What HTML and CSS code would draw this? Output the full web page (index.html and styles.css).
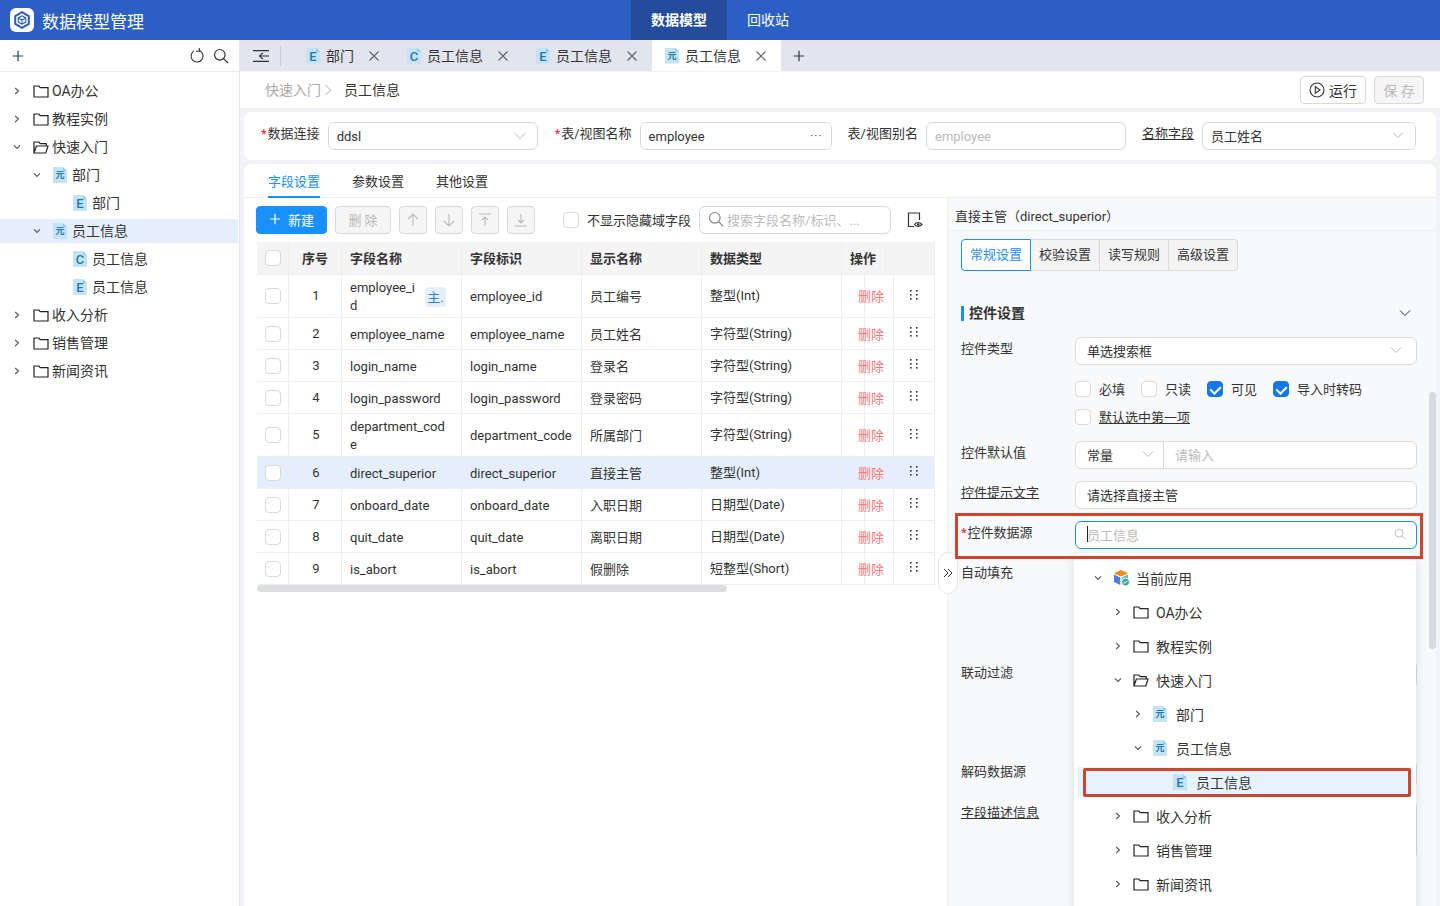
FILE: index.html
```html
<!DOCTYPE html>
<html lang="zh-CN">
<head>
  <meta charset="UTF-8">
  <title>数据模型管理</title>
  <link rel="stylesheet" href="styles.css">
</head>
<body>
  <svg class="sprite" aria-hidden="true">
    <symbol id="folder" viewBox="0 0 16 16"><path d="M1 3h4.8l1.4 1.6H15V14H1z" fill="none" stroke="currentColor" stroke-width="1.2"/></symbol>
    <symbol id="folder-open" viewBox="0 0 16 16"><path d="M1 14V3h4.8l1.4 1.6h6V7M1 14h11.8L15 7H3.4z" fill="none" stroke="currentColor" stroke-width="1.2"/></symbol>
    <symbol id="right" viewBox="0 0 8 8"><path d="M2.2 1l3.2 3-3.2 3" fill="none" stroke="currentColor" stroke-width="1.1"/></symbol>
    <symbol id="down" viewBox="0 0 8 8"><path d="M1 2.4l3 3 3-3" fill="none" stroke="currentColor" stroke-width="1.1"/></symbol>
    <symbol id="caret" viewBox="0 0 12 12"><path d="M1 3.5l5 5 5-5" fill="none" stroke="currentColor" stroke-width="1"/></symbol>
    <symbol id="close" viewBox="0 0 12 12"><path d="M1.5 1.5l9 9M10.5 1.5l-9 9" fill="none" stroke="currentColor" stroke-width="1.2"/></symbol>
    <symbol id="plus" viewBox="0 0 14 14"><path d="M7 1v12M1 7h12" fill="none" stroke="currentColor" stroke-width="1.4"/></symbol>
    <symbol id="search" viewBox="0 0 16 16"><circle cx="6.8" cy="6.8" r="5.3" fill="none" stroke="currentColor" stroke-width="1.2"/><path d="M10.8 10.8l4.2 4.2" fill="none" stroke="currentColor" stroke-width="1.2"/></symbol>
    <symbol id="dots" viewBox="0 0 10 12"><g fill="currentColor"><rect x="1" y="1" width="1.6" height="1.6"/><rect x="7" y="1" width="1.6" height="1.6"/><rect x="1" y="5" width="1.6" height="1.6"/><rect x="7" y="5" width="1.6" height="1.6"/><rect x="1" y="9" width="1.6" height="1.6"/><rect x="7" y="9" width="1.6" height="1.6"/></g></symbol>
  </svg>

  <header class="topbar">
    <div class="brand">
      <span class="logo">
        <svg width="18" height="18" viewBox="0 0 18 18"><path d="M9 1.2l6.8 3.9v7.8L9 16.8l-6.8-3.9V5.100z" fill="none" stroke="#2b5fc4" stroke-width="2"/><path d="M9 4.800l3.800 2.100v4.200L9 13.200l-3.800-2.100V6.900zM5.200 6.900L9 9l3.800-2.100M9 9v4.200" fill="none" stroke="#2b5fc4" stroke-width="1.100"/></svg>
      </span>
      <span class="brand-name">数据模型管理</span>
    </div>
    <nav class="topnav">
      <a class="topnav-item active">数据模型</a>
      <a class="topnav-item">回收站</a>
    </nav>
  </header>

  <div class="app">
    <aside class="sidebar">
      <div class="side-tools">
        <svg class="ico-plus"><use href="#plus"/></svg>
        <span class="side-tools-right">
          <svg width="16" height="16" viewBox="0 0 16 16"><path d="M5 2.900a6 6 0 1 0 5.500-.3M10.300 0v3.200H7" fill="none" stroke="#333" stroke-width="1.100"/></svg>
          <svg width="16" height="16"><use href="#search"/></svg>
        </span>
      </div>
      <div class="tree">
        <div class="node"><svg class="chev"><use href="#right"/></svg><svg class="folder"><use href="#folder"/></svg>OA办公</div>
        <div class="node"><svg class="chev"><use href="#right"/></svg><svg class="folder"><use href="#folder"/></svg>教程实例</div>
        <div class="node"><svg class="chev"><use href="#down"/></svg><svg class="folder"><use href="#folder-open"/></svg>快速入门</div>
        <div class="node lv1"><svg class="chev"><use href="#down"/></svg><span class="ficon small">元</span>部门</div>
        <div class="node lv2"><span class="chev"></span><span class="ficon">E</span>部门</div>
        <div class="node lv1 current"><svg class="chev"><use href="#down"/></svg><span class="ficon small">元</span>员工信息</div>
        <div class="node lv2"><span class="chev"></span><span class="ficon">C</span>员工信息</div>
        <div class="node lv2"><span class="chev"></span><span class="ficon">E</span>员工信息</div>
        <div class="node"><svg class="chev"><use href="#right"/></svg><svg class="folder"><use href="#folder"/></svg>收入分析</div>
        <div class="node"><svg class="chev"><use href="#right"/></svg><svg class="folder"><use href="#folder"/></svg>销售管理</div>
        <div class="node"><svg class="chev"><use href="#right"/></svg><svg class="folder"><use href="#folder"/></svg>新闻资讯</div>
      </div>
    </aside>

    <main class="main">
      <div class="tabbar">
        <span class="tab-toggle">
          <svg width="16" height="12" viewBox="0 0 16 12"><path d="M0 .6h16M0 11.400h16M6 6h10M10 2.800L6.500 6l3.500 3.200" fill="none" stroke="#333" stroke-width="1.100"/></svg>
        </span>
        <div class="tab"><span class="ficon">E</span><span class="tab-name">部门</span><svg class="tab-x"><use href="#close"/></svg></div>
        <div class="tab"><span class="ficon">C</span><span class="tab-name">员工信息</span><svg class="tab-x"><use href="#close"/></svg></div>
        <div class="tab"><span class="ficon">E</span><span class="tab-name">员工信息</span><svg class="tab-x"><use href="#close"/></svg></div>
        <div class="tab active"><span class="ficon small">元</span><span class="tab-name">员工信息</span><svg class="tab-x"><use href="#close"/></svg></div>
        <svg class="tab-add"><use href="#plus"/></svg>
      </div>

      <div class="crumbbar">
        <span class="crumb-parent">快速入门</span>
        <svg class="crumb-sep" viewBox="0 0 8 12"><path d="M1.500 1l5 5-5 5" fill="none" stroke="currentColor" stroke-width="1"/></svg>
        <span class="crumb-now">员工信息</span>
        <span class="crumb-actions">
          <button class="btn btn-run">
            <svg width="16" height="16" viewBox="0 0 16 16"><circle cx="8" cy="8" r="7" fill="none" stroke="#333" stroke-width="1.100"/><path d="M6.300 4.800L11 8l-4.700 3.200z" fill="none" stroke="#333" stroke-width="1.100"/></svg>
            运行
          </button>
          <button class="btn btn-save" disabled>保 存</button>
        </span>
      </div>

      <section class="basic-card">
        <div class="basic-item gap-17">
          <span class="basic-label"><i class="req">*</i>数据连接</span>
          <div class="field w-conn">ddsl<svg class="caret"><use href="#caret"/></svg></div>
        </div>
        <div class="basic-item gap-16">
          <span class="basic-label"><i class="req">*</i>表/视图名称</span>
          <div class="field w-table">employee<span class="more">···</span></div>
        </div>
        <div class="basic-item gap-16">
          <span class="basic-label">表/视图别名</span>
          <div class="field w-alias muted">employee</div>
        </div>
        <div class="basic-item">
          <span class="basic-label"><u>名称字段</u></span>
          <div class="field w-name">员工姓名<svg class="caret"><use href="#caret"/></svg></div>
        </div>
      </section>

      <section class="work-card">
        <div class="subtabs">
          <a class="subtab active">字段设置</a>
          <a class="subtab">参数设置</a>
          <a class="subtab">其他设置</a>
        </div>
        <div class="split">
          <div class="left-pane">
            <div class="toolbar">
              <button class="btn btn-primary"><svg width="12" height="12"><use href="#plus"/></svg>新建</button>
              <button class="btn btn-off btn-del">删 除</button>
              <button class="btn btn-off btn-ico"><svg width="12" height="14" viewBox="0 0 12 14"><path d="M6 13V1M1 6l5-5 5 5" fill="none" stroke="currentColor" stroke-width="1.100"/></svg></button>
              <button class="btn btn-off btn-ico"><svg width="12" height="14" viewBox="0 0 12 14"><path d="M6 1v12M1 8l5 5 5-5" fill="none" stroke="currentColor" stroke-width="1.100"/></svg></button>
              <button class="btn btn-off btn-ico"><svg width="12" height="14" viewBox="0 0 12 14"><path d="M0 1h12M6 13V4M3 7l3-3 3 3" fill="none" stroke="currentColor" stroke-width="1.100"/></svg></button>
              <button class="btn btn-off btn-ico"><svg width="12" height="14" viewBox="0 0 12 14"><path d="M0 13h12M6 1v9M3 7l3 3 3-3" fill="none" stroke="currentColor" stroke-width="1.100"/></svg></button>
              <label class="hide-check"><span class="check"></span>不显示隐藏域字段</label>
              <div class="field search-box muted"><svg width="16" height="16" class="search-ico"><use href="#search"/></svg>搜索字段名称/标识、...</div>
              <svg class="eye" width="16" height="16" viewBox="0 0 16 16"><path d="M7 14.500H1.500V1h11v7" fill="none" stroke="#333" stroke-width="1.200"/><path d="M7.500 12.500c1.800-2.600 5-2.600 7.500 0-2.500 2.600-5.700 2.600-7.500 0z" fill="#fff" stroke="#333" stroke-width="1.100"/><circle cx="11.200" cy="12.500" r="1.300" fill="#333"/></svg>
            </div>

            <div class="grid-table">
              <div class="thead">
                <div class="cell c-center"><span class="check"></span></div>
                <div class="cell c-center">序号</div>
                <div class="cell">字段名称</div>
                <div class="cell">字段标识</div>
                <div class="cell">显示名称</div>
                <div class="cell">数据类型</div>
                <div class="cell">操作</div>
                <div class="cell"></div>
              </div>
              <div class="trow tall">
                <div class="cell c-center"><span class="check"></span></div><div class="cell c-center">1</div>
                <div class="cell"><span class="name-short">employee_id</span><span class="pk">主.</span></div>
                <div class="cell">employee_id</div><div class="cell">员工编号</div><div class="cell">整型(Int)</div><div class="cell"></div>
                <div class="cell c-center c-del">删除</div><div class="cell c-center"><svg class="drag"><use href="#dots"/></svg></div>
              </div>
              <div class="trow">
                <div class="cell c-center"><span class="check"></span></div><div class="cell c-center">2</div>
                <div class="cell">employee_name</div>
                <div class="cell">employee_name</div><div class="cell">员工姓名</div><div class="cell">字符型(String)</div><div class="cell"></div>
                <div class="cell c-center c-del">删除</div><div class="cell c-center"><svg class="drag"><use href="#dots"/></svg></div>
              </div>
              <div class="trow">
                <div class="cell c-center"><span class="check"></span></div><div class="cell c-center">3</div>
                <div class="cell">login_name</div>
                <div class="cell">login_name</div><div class="cell">登录名</div><div class="cell">字符型(String)</div><div class="cell"></div>
                <div class="cell c-center c-del">删除</div><div class="cell c-center"><svg class="drag"><use href="#dots"/></svg></div>
              </div>
              <div class="trow">
                <div class="cell c-center"><span class="check"></span></div><div class="cell c-center">4</div>
                <div class="cell">login_password</div>
                <div class="cell">login_password</div><div class="cell">登录密码</div><div class="cell">字符型(String)</div><div class="cell"></div>
                <div class="cell c-center c-del">删除</div><div class="cell c-center"><svg class="drag"><use href="#dots"/></svg></div>
              </div>
              <div class="trow tall">
                <div class="cell c-center"><span class="check"></span></div><div class="cell c-center">5</div>
                <div class="cell c-wrap">department_code</div>
                <div class="cell">department_code</div><div class="cell">所属部门</div><div class="cell">字符型(String)</div><div class="cell"></div>
                <div class="cell c-center c-del">删除</div><div class="cell c-center"><svg class="drag"><use href="#dots"/></svg></div>
              </div>
              <div class="trow selected">
                <div class="cell c-center"><span class="check"></span></div><div class="cell c-center">6</div>
                <div class="cell">direct_superior</div>
                <div class="cell">direct_superior</div><div class="cell">直接主管</div><div class="cell">整型(Int)</div><div class="cell"></div>
                <div class="cell c-center c-del">删除</div><div class="cell c-center"><svg class="drag"><use href="#dots"/></svg></div>
              </div>
              <div class="trow">
                <div class="cell c-center"><span class="check"></span></div><div class="cell c-center">7</div>
                <div class="cell">onboard_date</div>
                <div class="cell">onboard_date</div><div class="cell">入职日期</div><div class="cell">日期型(Date)</div><div class="cell"></div>
                <div class="cell c-center c-del">删除</div><div class="cell c-center"><svg class="drag"><use href="#dots"/></svg></div>
              </div>
              <div class="trow">
                <div class="cell c-center"><span class="check"></span></div><div class="cell c-center">8</div>
                <div class="cell">quit_date</div>
                <div class="cell">quit_date</div><div class="cell">离职日期</div><div class="cell">日期型(Date)</div><div class="cell"></div>
                <div class="cell c-center c-del">删除</div><div class="cell c-center"><svg class="drag"><use href="#dots"/></svg></div>
              </div>
              <div class="trow">
                <div class="cell c-center"><span class="check"></span></div><div class="cell c-center">9</div>
                <div class="cell">is_abort</div>
                <div class="cell">is_abort</div><div class="cell">假删除</div><div class="cell">短整型(Short)</div><div class="cell"></div>
                <div class="cell c-center c-del">删除</div><div class="cell c-center"><svg class="drag"><use href="#dots"/></svg></div>
              </div>
              <div class="hscroll"></div>
            </div>
          </div>

          <div class="right-pane">
            <span class="fold-btn"><svg width="10" height="10" viewBox="0 0 10 10"><path d="M1 1l4 4-4 4M5 1l4 4-4 4" fill="none" stroke="#333" stroke-width="1"/></svg></span>
            <div class="pane-title">直接主管（direct_superior）</div>
            <div class="segments">
              <a class="seg active">常规设置</a>
              <a class="seg">校验设置</a>
              <a class="seg">读写规则</a>
              <a class="seg">高级设置</a>
            </div>
            <div class="section-head">
              <span class="section-name">控件设置</span>
              <svg width="12" height="12"><use href="#caret"/></svg>
            </div>

            <div class="form-row mt-14">
              <span class="form-label">控件类型</span>
              <div class="field form-ctl">单选搜索框<svg class="caret"><use href="#caret"/></svg></div>
            </div>
            <div class="check-row mt-15">
              <label class="opt w-66"><span class="check"></span>必填</label>
              <label class="opt w-66"><span class="check"></span>只读</label>
              <label class="opt w-66"><span class="check on"></span>可见</label>
              <label class="opt"><span class="check on"></span>导入时转码</label>
            </div>
            <div class="check-row mt-12">
              <label class="opt"><span class="check"></span><u>默认选中第一项</u></label>
            </div>
            <div class="form-row mt-17">
              <span class="form-label">控件默认值</span>
              <div class="field form-ctl combo">
                <span class="combo-left">常量<svg class="caret"><use href="#caret"/></svg></span>
                <span class="combo-right">请输入</span>
              </div>
            </div>
            <div class="form-row mt-12">
              <span class="form-label"><u>控件提示文字</u></span>
              <div class="field form-ctl">请选择直接主管</div>
            </div>
            <div class="form-row mt-12">
              <span class="form-label"><i class="req">*</i>控件数据源</span>
              <div class="field form-ctl focus"><span class="cursor"></span><span class="muted">员工信息</span><svg class="field-search"><use href="#search"/></svg></div>
            </div>
            <div class="form-row mt-12 h-88">
              <span class="form-label">自动填充</span>
            </div>
            <div class="form-row mt-12 h-87">
              <span class="form-label">联动过滤</span>
              <div class="field form-ctl"></div>
            </div>
            <div class="form-row mt-12 h-29">
              <span class="form-label">解码数据源</span>
              <div class="field form-ctl"></div>
            </div>
            <div class="form-row mt-12">
              <span class="form-label"><u>字段描述信息</u></span>
              <div class="field form-ctl area"></div>
            </div>
            <div class="vscroll"></div>

            <div class="popup">
              <div class="pnode"><svg class="chev"><use href="#down"/></svg>
                <svg class="app-ico" width="17" height="18" viewBox="0 0 17 18"><path d="M8 1l7 3.200-7 3.200-7-3.200z" fill="#f08a1c"/><path d="M1 5.500l6.300 3V16L1 13z" fill="#4f7fe0"/><path d="M8.700 8.500L15 5.500V10l-6.300 4z" fill="#5fb7a8"/><circle cx="12.500" cy="13" r="4" fill="#3ba99b" stroke="#fff"/><path d="M10.700 13l1.300 1.300 2.200-2.400" fill="none" stroke="#fff" stroke-width="1"/></svg>
                当前应用</div>
              <div class="pnode lv1"><svg class="chev"><use href="#right"/></svg><svg class="folder"><use href="#folder"/></svg>OA办公</div>
              <div class="pnode lv1"><svg class="chev"><use href="#right"/></svg><svg class="folder"><use href="#folder"/></svg>教程实例</div>
              <div class="pnode lv1"><svg class="chev"><use href="#down"/></svg><svg class="folder"><use href="#folder-open"/></svg>快速入门</div>
              <div class="pnode lv2"><svg class="chev"><use href="#right"/></svg><span class="ficon small">元</span>部门</div>
              <div class="pnode lv2"><svg class="chev"><use href="#down"/></svg><span class="ficon small">元</span>员工信息</div>
              <div class="pnode lv3 picked"><span class="chev"></span><span class="ficon">E</span>员工信息</div>
              <div class="pnode lv1"><svg class="chev"><use href="#right"/></svg><svg class="folder"><use href="#folder"/></svg>收入分析</div>
              <div class="pnode lv1"><svg class="chev"><use href="#right"/></svg><svg class="folder"><use href="#folder"/></svg>销售管理</div>
              <div class="pnode lv1"><svg class="chev"><use href="#right"/></svg><svg class="folder"><use href="#folder"/></svg>新闻资讯</div>
            </div>
            <div class="mark mark-source"></div>
            <div class="mark mark-node"></div>
          </div>
        </div>
      </section>
    </main>
  </div>
</body>
</html>
```

FILE: styles.css
```css
* {
  box-sizing: border-box;
}

html, body {
  height: 100%;
}

body {
  margin: 0;
  overflow: hidden;
  background: #fff;
  color: #333;
  font-family: Roboto, "Noto Sans CJK SC", sans-serif;
  font-size: 13px;
  display: flex;
  flex-direction: column;
}

i {
  font-style: normal;
}

.sprite {
  display: none;
}

svg {
  flex: none;
}

/* top bar */
.topbar {
  height: 40px;
  flex: none;
  background: #2b5fc4;
  color: #fff;
  display: flex;
  position: relative;
}

.brand {
  display: flex;
  align-items: center;
  padding-left: 10px;
  gap: 8px;
}

.logo {
  width: 24px;
  height: 24px;
  border-radius: 6px;
  background: #fff;
  display: flex;
  align-items: center;
  justify-content: center;
}

.brand-name {
  font-size: 17px;
}

.topnav {
  display: flex;
  margin-left: 487px;
}

.topnav-item {
  width: 96px;
  line-height: 40px;
  text-align: center;
  font-size: 14px;
}

.topnav-item.active {
  background: #254c9c;
  font-weight: 700;
}

.topnav-item + .topnav-item {
  width: auto;
  padding-left: 20px;
}

.app {
  flex: 1;
  display: flex;
  min-height: 0;
}

/* left tree */
.sidebar {
  width: 240px;
  flex: none;
  border-right: 1px solid #e4e6ea;
}

.side-tools {
  height: 32px;
  border-bottom: 1px solid #e8eaee;
  display: flex;
  align-items: center;
  justify-content: space-between;
  padding: 0 10px 0 12px;
  color: #333;
}

.ico-plus {
  width: 12px;
  height: 12px;
  color: #2c3e50;
}

.side-tools-right {
  display: flex;
  gap: 8px;
}

.tree {
  padding-top: 7px;
}

.node {
  height: 24px;
  margin-bottom: 4px;
  margin-right: 1px;
  display: flex;
  align-items: center;
  padding-left: 13px;
  padding-bottom: 3px;
  font-size: 14px;
  white-space: nowrap;
}

.node svg,
.node .ficon {
  margin-top: 3px;
}

.node.lv1 {
  padding-left: 33px;
}

.node.lv2 {
  padding-left: 53px;
}

.node.current {
  background: #e4eefc;
}

.chev {
  width: 8px;
  height: 8px;
  margin-right: 12px;
  color: #555;
  flex: none;
  display: inline-block;
}

.folder {
  width: 16px;
  height: 16px;
  margin-right: 3px;
  color: #222;
}

/* file style icon with a folded corner */
.ficon {
  width: 14px;
  height: 16px;
  margin-right: 5px;
  flex: none;
  background: #c4e3f5;
  color: #1c7ab0;
  font-size: 13px;
  font-weight: 500;
  line-height: 18px;
  text-align: center;
  position: relative;
  clip-path: polygon(0 0, 70% 0, 100% 25%, 100% 100%, 0 100%);
}

.ficon::after {
  content: "";
  position: absolute;
  right: 0;
  top: 0;
  width: 4px;
  height: 4px;
  background: #8ccbed;
  clip-path: polygon(0 0, 100% 100%, 0 100%);
}

.ficon.small {
  font-size: 9px;
  font-weight: 700;
  line-height: 17px;
}

/* main column */
.main {
  flex: 1;
  min-width: 0;
  background: #f1f3f7;
  display: flex;
  flex-direction: column;
}

.tabbar {
  height: 31px;
  flex: none;
  background: #e2e5ee;
  display: flex;
  align-items: center;
}

.tab-toggle {
  width: 53px;
  height: 20px;
  padding-left: 13px;
  border-right: 0;
  display: flex;
  align-items: center;
  position: relative;
}

.tab-toggle::after {
  content: "";
  position: absolute;
  left: 40px;
  top: 0;
  height: 20px;
  border-left: 1px solid #c8ccd6;
}

.tab {
  height: 31px;
  padding: 0 14px 0 13px;
  display: flex;
  align-items: center;
  font-size: 14px;
  white-space: nowrap;
}

.tab .ficon {
  margin-right: 6px;
}

.tab.active {
  background: #fff;
}

.tab-name {
  margin-right: 14px;
  margin-bottom: 2px;
}

.tab-x {
  width: 12px;
  height: 12px;
  color: #666;
}

.tab-add {
  width: 12px;
  height: 12px;
  margin-left: 12px;
  color: #333;
}

.crumbbar {
  height: 36px;
  flex: none;
  margin-top: 1px;
  background: #fff;
  display: flex;
  align-items: center;
  padding: 0 16px 0 25px;
  font-size: 14px;
}

.crumb-parent {
  color: #aaa;
  margin-bottom: 2px;
}

.crumb-sep {
  width: 8px;
  height: 12px;
  margin: 0 12px 0 3px;
  color: #aaa;
}

.crumb-now {
  color: #333;
  margin-bottom: 2px;
}

.crumb-actions {
  margin-left: auto;
  display: flex;
  gap: 8px;
}

.btn {
  height: 28px;
  padding: 0;
  border: 1px solid #d9d9d9;
  border-radius: 4px;
  background: #fff;
  color: #333;
  font: inherit;
  font-size: 14px;
  display: inline-flex;
  align-items: center;
  justify-content: center;
}

.btn-run {
  width: 66px;
  gap: 4px;
}

.btn-save {
  width: 50px;
  background: #f5f5f5;
  color: #bbb;
}

.btn-primary {
  width: 71px;
  gap: 7px;
  padding-bottom: 2px;
  background: #1890ff;
  border-color: #1890ff;
  color: #fff;
  font-size: 13px;
}

.btn-off {
  background: #f5f5f5;
  color: #bbb;
  font-size: 13px;
}

.btn-del {
  width: 56px;
  padding-bottom: 2px;
}

.btn-ico {
  width: 28px;
}

/* basic info card */
.basic-card {
  height: 48px;
  flex: none;
  margin: 4px 4px 4px 4px;
  background: #fff;
  border-radius: 8px;
  display: flex;
  align-items: flex-start;
  padding: 10px 0 0 17px;
}

.basic-item {
  display: flex;
  gap: 8px;
}

.gap-17 {
  margin-right: 17px;
}

.gap-16 {
  margin-right: 16px;
}

.basic-label {
  line-height: 24px;
  white-space: nowrap;
}

.req {
  color: #f5222d;
  margin-right: 1px;
}

.field {
  height: 28px;
  border: 1px solid #d9d9d9;
  border-radius: 6px;
  background: #fff;
  display: flex;
  align-items: center;
  padding: 0 8px;
  position: relative;
  white-space: nowrap;
}

.w-conn {
  width: 210px;
}

.w-table {
  width: 192px;
}

.w-alias {
  width: 200px;
}

.w-name {
  width: 214px;
  padding-bottom: 2px;
}

.muted {
  color: #bbb;
}

.caret {
  width: 12px;
  height: 12px;
  margin-left: auto;
  margin-right: 3px;
  color: #bbb;
}

.more {
  margin-left: auto;
  color: #555;
  font-size: 12px;
  letter-spacing: 1px;
}

/* tabs + split area */
.work-card {
  flex: 1;
  min-height: 0;
  margin: 0 4px;
  background: #fff;
  border-radius: 8px 8px 0 0;
  display: flex;
  flex-direction: column;
}

.subtabs {
  height: 34px;
  flex: none;
  display: flex;
  gap: 32px;
  padding-left: 24px;
  border-bottom: 1px solid #eceef1;
}

.subtab {
  height: 34px;
  line-height: 36px;
}

.subtab.active {
  color: #1890ff;
  border-bottom: 2px solid #1890ff;
}

.split {
  flex: 1;
  min-height: 0;
  display: flex;
}

.left-pane {
  width: 704px;
  flex: none;
  border-right: 1px solid #eceef1;
  padding-top: 8px;
}

.toolbar {
  height: 28px;
  display: flex;
  align-items: center;
  gap: 8px;
  padding-left: 12px;
}

.check {
  width: 16px;
  height: 16px;
  flex: none;
  display: inline-block;
  border: 1px solid #d9d9d9;
  border-radius: 4px;
  background: #fff;
  position: relative;
}

.check.on {
  background: #1677e8;
  border-color: #1677e8;
}

.check.on::after {
  content: "";
  position: absolute;
  left: 4px;
  top: 2px;
  width: 5px;
  height: 8px;
  border: solid #fff;
  border-width: 0 2px 2px 0;
  transform: rotate(45deg);
}

.hide-check {
  display: flex;
  align-items: center;
  gap: 8px;
  margin-left: 20px;
  padding-bottom: 2px;
  white-space: nowrap;
}

.hide-check .check {
  margin-top: 2px;
}

.search-box {
  width: 192px;
  gap: 3px;
  padding-bottom: 2px;
}

.search-ico {
  color: #888;
}

.eye {
  margin-left: 8px;
}

/* field table */
.grid-table {
  margin: 8px 0 0 13px;
  width: 678px;
}

.thead,
.trow {
  display: grid;
  border-bottom: 1px solid #eceef1;
  height: 32px;
}

.thead {
  height: 33px;
  grid-template-columns: 32px 53px 120px 120px 120px 140px 44px 49px;
  background: #f4f4f5;
  font-weight: 700;
}

.trow {
  grid-template-columns: 32px 53px 120px 120px 120px 140px 7px 45px 41px;
}

.trow.tall {
  height: 43px;
}

.trow.selected {
  background: #e4eefc;
}

.cell {
  display: flex;
  align-items: center;
  padding: 2px 14px 0 8px;
  border-right: 1px solid #eceef1;
  min-width: 0;
  line-height: 18px;
  white-space: nowrap;
}

.trow .cell:nth-child(6) {
  padding-top: 0;
}

.trow .cell:nth-child(2) {
  padding-left: 2px;
}

.thead .cell:nth-child(2) {
  padding-top: 2px;
}

.c-center {
  justify-content: center;
  padding: 0;
}

.c-wrap {
  white-space: normal;
  word-break: break-all;
}

.c-del {
  padding-top: 2px;
  color: #ff7875;
}

.name-short {
  width: 68px;
  flex: none;
  white-space: normal;
  word-break: break-all;
}

.pk {
  width: 21px;
  height: 20px;
  margin-left: 7px;
  flex: none;
  border-radius: 4px;
  background: #e6f0fd;
  color: #2f7bf0;
  font-size: 13px;
  line-height: 22px;
  text-align: center;
}

.drag {
  width: 10px;
  height: 12px;
  margin-top: -3px;
  color: #333;
}

.hscroll {
  width: 470px;
  height: 7px;
  border-radius: 4px;
  background: #dcdee2;
}

/* right panel */
.right-pane {
  flex: 1;
  min-width: 0;
  background: #f8f9fb;
  position: relative;
  padding-left: 13px;
}

.pane-title {
  height: 33px;
  margin-left: -13px;
  padding: 7px 0 0 7px;
  line-height: 24px;
  border-bottom: 1px solid #eceef1;
}

.segments {
  display: flex;
  margin-top: 8px;
  width: 277px;
  height: 32px;
}

.seg {
  flex: 1;
  line-height: 30px;
  text-align: center;
  background: #f4f4f5;
  border: 1px solid #d9d9d9;
  border-left: 0;
}

.seg:last-child {
  border-radius: 0 4px 4px 0;
}

.seg.active {
  background: #fff;
  color: #1890ff;
  border: 1px solid #1890ff;
  border-radius: 4px 0 0 4px;
}

.section-head {
  margin-top: 32px;
  height: 20px;
  display: flex;
  align-items: center;
  justify-content: space-between;
  padding-right: 25px;
}

.section-name {
  font-weight: 700;
  font-size: 14px;
  line-height: 15px;
  padding-left: 5px;
  border-left: 3px solid #1890ff;
}

.form-row {
  display: flex;
  width: 456px;
}

.form-label {
  width: 114px;
  flex: none;
  line-height: 24px;
  white-space: nowrap;
}

.form-ctl {
  width: 342px;
  padding: 0 11px 2px;
}

.mt-12 {
  margin-top: 12px;
}

.mt-14 {
  margin-top: 14px;
}

.mt-15 {
  margin-top: 15px;
}

.mt-17 {
  margin-top: 17px;
}

.h-88 {
  height: 88px;
}

.h-87 {
  height: 87px;
}

.h-29 {
  height: 29px;
}

.area {
  height: 58px;
}

.check-row {
  display: flex;
  padding-left: 114px;
  height: 16px;
}

.opt {
  display: flex;
  align-items: center;
  gap: 8px;
  white-space: nowrap;
}

.opt .check {
  margin-top: 2px;
}

.w-66 {
  width: 66px;
}

.combo {
  padding: 0;
}

.combo-left {
  width: 88px;
  height: 100%;
  padding: 0 6px 2px 11px;
  display: flex;
  align-items: center;
  border-right: 1px solid #d9d9d9;
}

.combo-right {
  padding: 0 0 2px 11px;
  color: #bbb;
}

.focus {
  border-color: #1890ff;
}

.cursor {
  width: 1px;
  height: 16px;
  margin-right: -1px;
  background: #222;
}

.field-search {
  width: 12px;
  height: 12px;
  margin-left: auto;
  margin-right: -1px;
  color: #bbb;
}

.vscroll {
  position: absolute;
  right: 0;
  top: 194px;
  width: 7px;
  height: 257px;
  border-radius: 4px;
  background: #d6d9e0;
}

.fold-btn {
  position: absolute;
  left: -10px;
  top: 354px;
  width: 20px;
  height: 42px;
  border: 1px solid #e6e6e6;
  border-radius: 10px;
  background: #fff;
  display: flex;
  align-items: center;
  justify-content: center;
  z-index: 3;
}

/* dropdown tree */
.popup {
  position: absolute;
  left: 126px;
  top: 355px;
  width: 342px;
  height: 360px;
  padding-top: 10px;
  background: #fff;
  border-radius: 8px;
  box-shadow: 0 3px 12px rgba(0, 0, 0, 0.12);
  font-size: 14px;
  z-index: 2;
}

.pnode {
  height: 30px;
  margin: 0 5px 4px 4px;
  padding-left: 16px;
  display: flex;
  align-items: center;
  white-space: nowrap;
}

.pnode.lv1 {
  padding-left: 36px;
}

.pnode.lv2 {
  padding-left: 56px;
}

.pnode.lv3 {
  padding-left: 76px;
}

.pnode.picked {
  background: #e6f3fc;
}

.pnode .chev {
  margin-right: 11px;
}

.pnode .folder {
  margin-right: 7px;
}

.pnode .ficon {
  margin-right: 9px;
}

.app-ico {
  margin-right: 6px;
}

/* red callouts drawn over the page */
.mark {
  position: absolute;
  border: 3px solid #d0452f;
  z-index: 4;
  pointer-events: none;
}

.mark-source {
  left: 7px;
  top: 315px;
  width: 468px;
  height: 46px;
}

.mark-node {
  left: 135px;
  top: 570px;
  width: 328px;
  height: 29px;
  border-radius: 2px;
}
```
